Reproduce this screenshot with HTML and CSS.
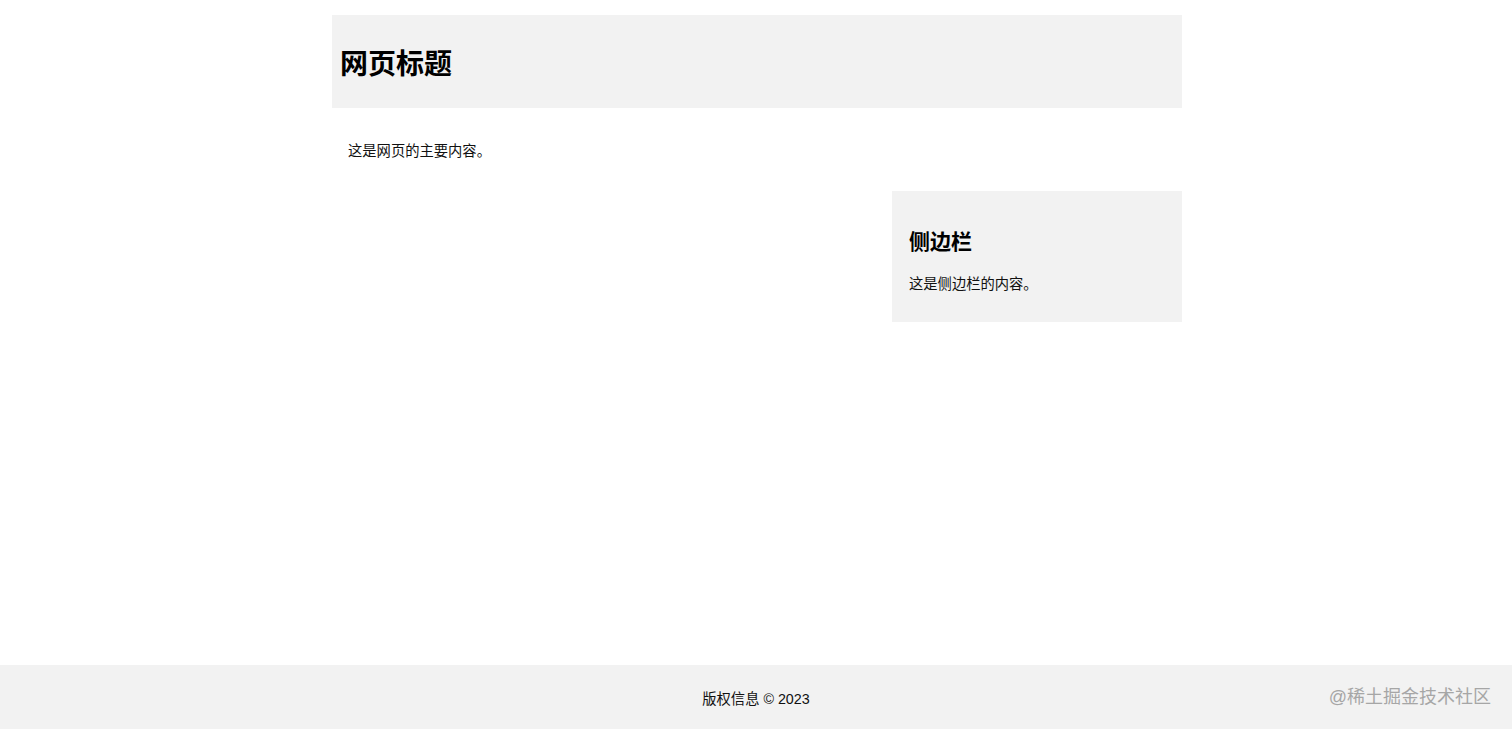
FILE: index.html
```html
<!DOCTYPE html>
<html lang="zh-CN">
<head>
<meta charset="utf-8">
<title>网页标题</title>
<link rel="stylesheet" href="styles.css">
</head>
<body>
<div class="page">
  <div class="container">
    <header class="site-header">
      <h1 class="site-title">网页标题</h1>
    </header>
    <main class="main">
      <p class="main-text">这是网页的主要内容。</p>
    </main>
    <aside class="sidebar">
      <h2 class="sidebar-title">侧边栏</h2>
      <p class="sidebar-text">这是侧边栏的内容。</p>
    </aside>
  </div>
  <footer class="site-footer">
    <p class="footer-text">版权信息 © 2023</p>
    <span class="watermark">@稀土掘金技术社区</span>
  </footer>
</div>
</body>
</html>
```
FILE: styles.css
```css
html, body {
  margin: 0;
  padding: 0;
  height: 100%;
}
body {
  font-family: "Liberation Sans", "Noto Sans CJK SC", sans-serif;
  color: #111;
  background: #fff;
}
.page {
  min-height: 729px;
  display: flex;
  flex-direction: column;
}
.container {
  width: 850px;
  margin: 15px 0 0 calc(50% - 424px);
  flex: 1;
  display: flex;
  flex-direction: column;
}
.site-header {
  background: #f2f2f2;
  height: 93px;
  padding: 0 8px;
  box-sizing: border-box;
  display: flex;
  align-items: center;
}
.site-title {
  margin: 6px 0 0;
  font-size: 28px;
  font-weight: 700;
  line-height: 32px;
  color: #000;
}
.main {
  padding: 16px;
}
.main-text {
  margin: 16px 0 12px;
  font-size: 14.3px;
  line-height: 23px;
}
.sidebar {
  align-self: flex-end;
  width: 290px;
  height: 131px;
  box-sizing: border-box;
  background: #f2f2f2;
  padding: 36px 17px 0;
}
.sidebar-title {
  margin: 0;
  font-size: 21px;
  font-weight: 700;
  line-height: 30px;
  color: #000;
}
.sidebar-text {
  margin: 17px 0 0;
  font-size: 14.3px;
  line-height: 20px;
}
.site-footer {
  position: relative;
  background: #f2f2f2;
  height: 64px;
  display: flex;
  align-items: center;
  justify-content: center;
}
.footer-text {
  margin: 4px 0 0;
  font-size: 14.3px;
  line-height: 20px;
}
.watermark {
  position: absolute;
  right: 21px;
  top: 21px;
  font-size: 18px;
  line-height: 22px;
  color: #a6a6a6;
}
```
